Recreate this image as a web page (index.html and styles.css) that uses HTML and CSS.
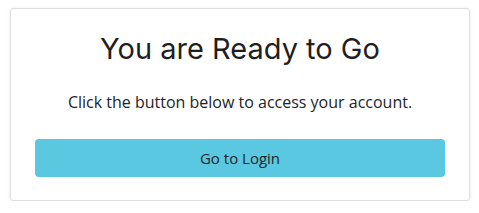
FILE: index.html
```html
<!DOCTYPE html>
<html lang="en">
<head>
    <meta charset="UTF-8">
    <meta name="viewport" content="width=device-width, initial-scale=1.0">
    <title>Ready to Go</title>
    <link rel="stylesheet" href="styles.css">
</head>
<body>

<div class="card">
    <h1>You are Ready to Go</h1>
    <p>Click the button below to access your account.</p>
    <a class="login-btn" href="#">Go to Login</a>
</div>

</body>
</html>
```

FILE: styles.css
```css
body {
    font-family: "Open Sans", Arial, sans-serif;
    margin: 0;
    padding: 8px 9px 0 10px;
    background-color: #ffffff;
    color: #212529;
}
.card {
    width: 460px;
    box-sizing: border-box;
    border: 1px solid #dedede;
    border-radius: 3px;
    box-shadow: 0 1px 4px rgba(0, 0, 0, 0.08);
    padding: 22px 24px 23px 24px;
    text-align: center;
}
h1 {
    font-family: Inter, "Open Sans", sans-serif;
    font-weight: 400;
    font-size: 29px;
    line-height: 36px;
    margin: 0 0 24px;
    color: #1f1f1f;
}
p {
    font-size: 16px;
    line-height: 22px;
    margin: 0 0 26px;
}
.login-btn {
    display: block;
    background: #5ac8e0;
    color: #212529;
    text-decoration: none;
    font-size: 15px;
    line-height: 22px;
    padding: 8px 0;
    border-radius: 4px;
}
```
